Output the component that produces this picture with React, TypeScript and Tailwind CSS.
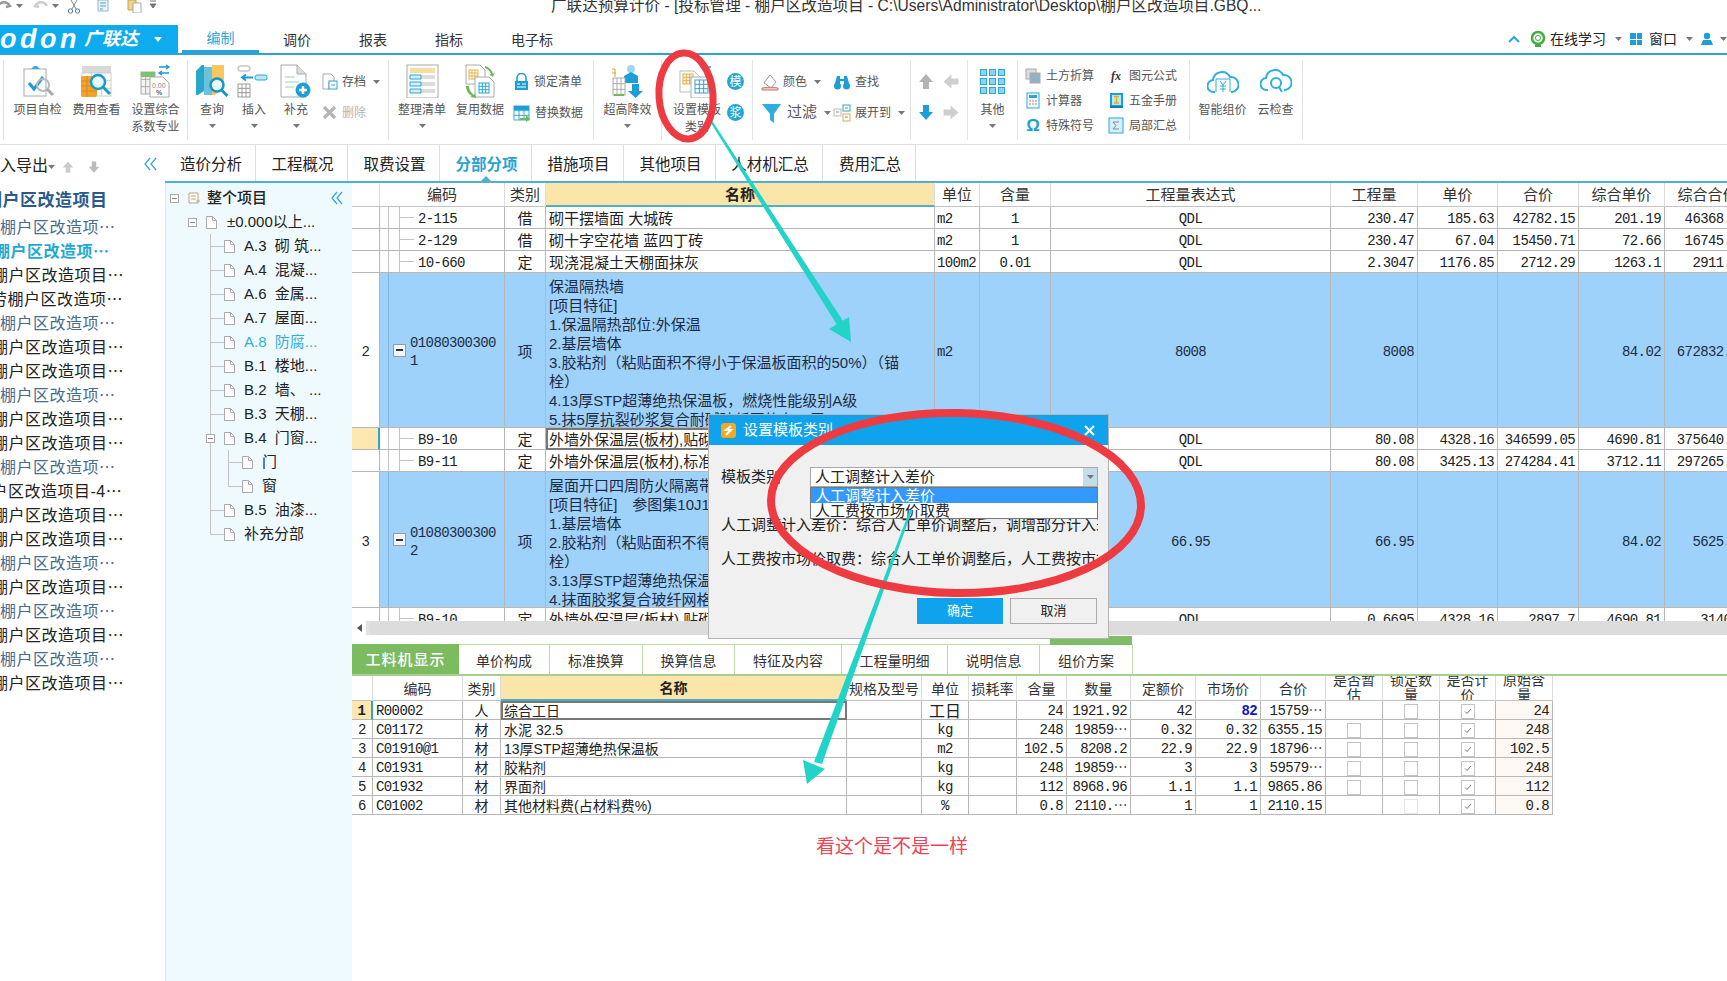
import type { ReactNode } from 'react';

function Caret({ className = '' }: { className?: string }) {
  return (
    <svg width="7" height="4" viewBox="0 0 7 4" className={className}>
      <path d="M0 0h7L3.5 4z" fill="#777" />
    </svg>
  );
}

function Svg({ w = 34, h = 34, children }: { w?: number; h?: number; children: ReactNode }) {
  return (
    <svg width={w} height={h} viewBox={`0 0 ${w} ${h}`} className="shrink-0">
      {children}
    </svg>
  );
}

/* ---------- ribbon icons ---------- */
const Grid3 = ({ x, y, w, h, c = '#999', f = '#fff' }: { x: number; y: number; w: number; h: number; c?: string; f?: string }) => (
  <g>
    <rect x={x} y={y} width={w} height={h} fill={f} stroke={c} />
    <path d={`M${x} ${y + h / 3}h${w}M${x} ${y + (2 * h) / 3}h${w}M${x + w / 3} ${y}v${h}M${x + (2 * w) / 3} ${y}v${h}`} stroke={c} />
  </g>
);

const Icons = {
  selfCheck: (
    <Svg>
      <rect x="3" y="5" width="22" height="27" fill="#fff" stroke="#aaa" />
      <path d="M10 5l3-3h3l3 3z" fill="#3ab0df" />
      <path d="M8 19l5 6 9-12" fill="none" stroke="#1f9ad6" strokeWidth="3" />
      <circle cx="22" cy="21" r="6" fill="none" stroke="#bbb" strokeWidth="2" />
      <path d="M26 25l6 6" stroke="#aaa" strokeWidth="3" />
    </Svg>
  ),
  cost: (
    <Svg>
      <rect x="2" y="2" width="29" height="8" fill="#d9d9d9" />
      <Grid3 x={2} y={9} w={29} h={23} c="#ccc" />
      <rect x="1" y="12" width="16" height="21" rx="2" fill="#f3a32c" />
      <path d="M1 17h16M1 22h16M1 27h16M7 12v21" stroke="#d98a17" />
      <circle cx="18" cy="18" r="7" fill="#e6f6fb" stroke="#1b9cc4" strokeWidth="2.5" />
      <path d="M23 23l7 7" stroke="#1b9cc4" strokeWidth="3" />
    </Svg>
  ),
  compose: (
    <Svg>
      <Grid3 x={2} y={8} w={14} h={22} c="#aaa" f="#f4f4f4" />
      <rect x="2" y="8" width="14" height="5" fill="#7cc36b" />
      <path d="M11 13h13l6 6v14H11z" fill="#fff" stroke="#aaa" />
      <text x="13" y="24" fontSize="7" fill="#888" fontFamily="Liberation Sans">0.00</text>
      <text x="17" y="31" fontSize="7" fontWeight="700" fill="#666" fontFamily="Liberation Sans">%</text>
      <path d="M20 3h10M27 1l3 2-3 2M30 9H20m3-2l-3 2 3 2" fill="none" stroke="#1f9ad6" strokeWidth="1.4" />
    </Svg>
  ),
  query: (
    <Svg>
      <path d="M1 7l6-6h2v26l-6 4H1z" fill="#27a7c9" />
      <path d="M9 3h8v28H9z" fill="#6cc2dc" />
      <path d="M17 1h12v22l-9 8h-3z" fill="#f9c660" />
      <circle cx="22" cy="21" r="6.5" fill="#eaf7fb" stroke="#1b95c4" strokeWidth="2.5" />
      <path d="M26.5 26l6 6" stroke="#1b95c4" strokeWidth="3" />
    </Svg>
  ),
  insert: (
    <Svg>
      <rect x="1" y="2" width="12" height="5" rx="2" fill="#fff" stroke="#aaa" />
      <rect x="18" y="11" width="12" height="5" rx="2" fill="#bde6f6" stroke="#2ba6d9" />
      <path d="M16 13.5H5m4-3l-4 3 4 3" fill="none" stroke="#1f9ad6" strokeWidth="2" />
      <Grid3 x={1} y={20} w={12} h={13} />
    </Svg>
  ),
  supplement: (
    <Svg>
      <path d="M2 1h16l9 9v23H2z" fill="#fff" stroke="#aaa" />
      <path d="M18 1v9h9" fill="#ddd" stroke="#aaa" />
      <path d="M6 13h10M6 18h14M6 23h9" stroke="#9fd6a0" strokeWidth="1.2" />
      <circle cx="24" cy="26" r="7.5" fill="#1c9fd8" />
      <path d="M24 22v8M20 26h8" stroke="#fff" strokeWidth="2.4" />
    </Svg>
  ),
  archive: (
    <Svg w={17} h={17}>
      <path d="M2 1h8l3 3v5H8v7H2z" fill="#fff" stroke="#aaa" />
      <rect x="8" y="8" width="8" height="8" fill="#fff" stroke="#2ba6d9" />
      <path d="M10 12h4" stroke="#2ba6d9" />
    </Svg>
  ),
  del: (
    <Svg w={17} h={17}>
      <path d="M3 3l11 11M14 3L3 14" stroke="#b5b5b5" strokeWidth="3.2" />
    </Svg>
  ),
  arrange: (
    <Svg>
      <rect x="2" y="1" width="31" height="33" fill="#fff" stroke="#aaa" />
      <rect x="5" y="4" width="25" height="5" fill="#f4dfa0" />
      <path d="M5 11h25v4H5zM5 18h25v4H5zM5 25h25v4H5z" fill="#dcdcdc" />
      <path d="M5 11h11v4H5zM5 18h11v4H5zM5 25h11v4H5z" fill="#d6eef8" stroke="#2ba6d9" />
    </Svg>
  ),
  reuse: (
    <Svg>
      <path d="M3 1h14l5 5v14H3z" fill="#fff" stroke="#aaa" />
      <Grid3 x={6} y={6} w={9} h={9} c="#e3b448" />
      <path d="M12 13h14l5 5v15H12z" fill="#fff" stroke="#aaa" />
      <Grid3 x={16} y={19} w={10} h={10} c="#2ba6d9" />
      <path d="M22 2c4 1 7 4 8 8l2-2-2 5-4-3 2 0c-1-3-3-5-6-6z" fill="#6cb858" />
      <path d="M3 22c0 4 2 8 6 10l-2 1 6 1-1-5-1 2c-3-2-5-5-5-9z" fill="#6cb858" />
    </Svg>
  ),
  lock: (
    <Svg w={17} h={18}>
      <path d="M4 8V5a4.500 4.500 0 0 1 9 0v3" fill="none" stroke="#1c9fd8" strokeWidth="1.6" />
      <rect x="2" y="8" width="13" height="9" fill="#1c9fd8" />
      <path d="M4 11h3M9 11h4M4 14h9" stroke="#fff" />
    </Svg>
  ),
  replace: (
    <Svg w={18} h={18}>
      <Grid3 x={1} y={2} w={15} h={14} c="#3aa9d4" />
      <rect x="1" y="2" width="15" height="4" fill="#1c9fd8" />
      <path d="M7 14h6v-3l4 4-4 3v-2H7z" fill="#6cb858" />
    </Svg>
  ),
  raise: (
    <Svg>
      <path d="M1 5h3v8M1 9h4" stroke="#d9a437" fill="none" />
      <circle cx="20" cy="5" r="4" fill="#9fd8ee" />
      <path d="M13 12l7-4 7 4v7H13z" fill="#1c9fd8" />
      <Grid3 x={2} y={14} w={12} h={17} c="#aaa" />
      <path d="M21 20h7v7h4l-7.500 7L17 27h4z" fill="#1c9fd8" />
      <path d="M3 31h10" stroke="#6cb858" strokeWidth="2" />
    </Svg>
  ),
  template: (
    <Svg w={36} h={34}>
      <path d="M1 7h14l6 6v15H1z" fill="#fff" stroke="#bbb" />
      <Grid3 x={4} y={10} w={10} h={10} c="#e3b448" f="#fbf3dc" />
      <path d="M12 13h15l7 6v15H12z" fill="#fff" stroke="#aaa" />
      <Grid3 x={16} y={16} w={13} h={13} c="#2ba6d9" />
      <path d="M32 3h-9m3-2.500L22 3l4 2.500" fill="none" stroke="#1f9ad6" strokeWidth="1.6" />
    </Svg>
  ),
  bucket: (
    <Svg w={18} h={18}>
      <path d="M9 2l6 7-5 6-7-5z" fill="#fff" stroke="#999" />
      <path d="M1 15c5-1 11-1 16 0v2H1z" fill="#f1c8c8" stroke="#c77" />
    </Svg>
  ),
  binoculars: (
    <Svg w={18} h={18}>
      <path d="M4 3h3v3h4V3h3l3 11h-6V8H7v6H1z" fill="#1c9fd8" />
      <circle cx="4.500" cy="13" r="3.500" fill="#1c9fd8" />
      <circle cx="13.500" cy="13" r="3.500" fill="#1c9fd8" />
    </Svg>
  ),
  funnel: (
    <Svg w={22} h={22}>
      <path d="M1 2h19l-7 10v9l-4-3v-6z" fill="#31aee0" />
    </Svg>
  ),
  expand: (
    <Svg w={18} h={18}>
      <rect x="1" y="5" width="7" height="7" fill="#fff" stroke="#bbb" />
      <rect x="10" y="1" width="7" height="6" fill="#fff" stroke="#2ba6d9" />
      <rect x="10" y="10" width="7" height="7" fill="#fff" stroke="#e0a94a" />
      <path d="M3 8h3M12 4h3M12 13h3" stroke="#888" />
    </Svg>
  ),
  earth: (
    <Svg w={16} h={16}>
      <rect x="1" y="1" width="10" height="10" fill="#ddd" stroke="#aaa" />
      <rect x="5" y="5" width="10" height="10" fill="#8fb4c4" stroke="#aaa" />
    </Svg>
  ),
  calc: (
    <Svg w={16} h={17}>
      <rect x="2" y="1" width="12" height="15" fill="#fff" stroke="#2ba6d9" />
      <rect x="4" y="3" width="8" height="3" fill="#2ba6d9" />
      <path d="M4 9h2M7 9h2M10 9h2M4 12h2M7 12h2M10 12h2" stroke="#888" />
    </Svg>
  ),
  hand: (
    <Svg w={16} h={17}>
      <rect x="2" y="1" width="13" height="14" fill="#1c9fd8" />
      <rect x="4" y="3" width="9" height="10" fill="#bfe6f6" />
      <path d="M6 4.500h5M8.500 4.500V11M6 11h5" stroke="#e0b020" strokeWidth="1.4" />
      <path d="M2 15h13" stroke="#0b7fb4" strokeWidth="2" />
    </Svg>
  ),
  sum: (
    <Svg w={16} h={17}>
      <rect x="1" y="1" width="14" height="15" fill="#d6f0fa" stroke="#2ba6d9" />
      <path d="M11 5H5l3 3.500L5 12h6" fill="none" stroke="#888" />
    </Svg>
  ),
  cloudYen: (
    <Svg w={32} h={26}>
      <path d="M8 24H7a6 6 0 0 1-1-12 9 9 0 0 1 17-3 7.500 7.500 0 0 1 2 15h-1" fill="none" stroke="#2bb0df" strokeWidth="2" />
      <path d="M9 24V11h14v13" fill="none" stroke="#2bb0df" strokeWidth="1" />
      <path d="M13 13l3 4 3-4M16 17v7M13 18h6M13 21h6" fill="none" stroke="#2bb0df" strokeWidth="1" />
    </Svg>
  ),
  cloudSearch: (
    <Svg w={32} h={26}>
      <path d="M8 22H7a6 6 0 0 1-1-12 9 9 0 0 1 17-3 7.500 7.500 0 0 1 2 15h-1" fill="none" stroke="#2bb0df" strokeWidth="2" />
      <circle cx="16" cy="15" r="5" fill="#fff" stroke="#2bb0df" strokeWidth="2" />
      <path d="M19 19l3 5" stroke="#2bb0df" strokeWidth="2" />
    </Svg>
  ),
};

/* ---------- ribbon parts ---------- */
function Big({ icon, label, line2, caret, w }: { icon: ReactNode; label: string; line2?: string; caret?: boolean; w: string }) {
  return (
    <div className={`flex flex-col items-center pt-1 ${w}`}>
      <div className="flex h-[34px] items-center justify-center">{icon}</div>
      <div className="mt-[4px] whitespace-nowrap text-[12px] leading-[17px] text-[#555]">{label}</div>
      {line2 && <div className="whitespace-nowrap text-[12px] leading-[17px] text-[#555]">{line2}</div>}
      {caret && <Caret className="mt-[5px]" />}
    </div>
  );
}

function Small({ icon, label, caret, muted, big }: { icon: ReactNode; label: string; caret?: boolean; muted?: boolean; big?: boolean }) {
  return (
    <div className="flex h-[31px] items-center gap-[4px]">
      {icon}
      <span className={`whitespace-nowrap ${big ? 'text-[15px] text-[#333]' : 'text-[12px]'} ${muted ? 'text-[#b5b5b5]' : 'text-[#555]'}`}>{label}</span>
      {caret && <Caret className="ml-[3px]" />}
    </div>
  );
}

function SmallRow({ icon, label }: { icon: ReactNode; label: string }) {
  return (
    <div className="flex h-[25px] items-center gap-[5px]">
      {icon}
      <span className="whitespace-nowrap text-[12px] text-[#555]">{label}</span>
    </div>
  );
}

function Group({ w, children, first }: { w: string; children: ReactNode; first?: boolean }) {
  return (
    <div className={`my-[5px] flex h-[80px] shrink-0 border-r border-[#e4e4e4] ${first ? 'border-l' : ''} ${w}`}>{children}</div>
  );
}

function Arrow({ d, color }: { d: number; color: string }) {
  return (
    <svg width="16" height="17" viewBox="0 0 16 17" style={{ transform: `rotate(${d}deg)` }}>
      <path d="M8 1l7 8h-4v7H5V9H1z" fill={color} />
    </svg>
  );
}

function Ribbon() {
  return (
    <div className="flex h-[90px] border-b border-[#e0e0e0] pl-[3px]">
      <Group first w="w-[185px] pl-[4px]">
        <Big w="w-[59px]" icon={Icons.selfCheck} label="项目自检" />
        <Big w="w-[59px]" icon={Icons.cost} label="费用查看" />
        <Big w="w-[59px]" icon={Icons.compose} label="设置综合" line2="系数专业" />
      </Group>
      <Group w="w-[201px] pl-[3px]">
        <Big w="w-[42px]" icon={Icons.query} label="查询" caret />
        <Big w="w-[42px]" icon={Icons.insert} label="插入" caret />
        <Big w="w-[42px]" icon={Icons.supplement} label="补充" caret />
        <div className="ml-[4px] flex flex-col pt-[6px]">
          <Small icon={Icons.archive} label="存档" caret />
          <Small icon={Icons.del} label="删除" muted />
        </div>
      </Group>
      <Group w="w-[205px] pl-[4px]">
        <Big w="w-[58px]" icon={Icons.arrange} label="整理清单" caret />
        <Big w="w-[58px]" icon={Icons.reuse} label="复用数据" />
        <div className="ml-[4px] flex flex-col pt-[6px]">
          <Small icon={Icons.lock} label="锁定清单" />
          <Small icon={Icons.replace} label="替换数据" />
        </div>
      </Group>
      <Group w="w-[68px]">
        <Big w="w-[67px]" icon={Icons.raise} label="超高降效" caret />
      </Group>
      <Group w="w-[91px] pl-[6px]">
        <Big w="w-[58px]" icon={Icons.template} label="设置模板" line2="类别" />
        <div className="ml-[1px] flex flex-col pt-[6px]">
          {['模', '浆'].map((t) => (
            <div key={t} className="flex h-[31px] items-center">
              <span className="flex h-[17px] w-[17px] items-center justify-center rounded-full bg-[#23a6d5] text-[12px] leading-none text-white">{t}</span>
            </div>
          ))}
        </div>
      </Group>
      <Group w="w-[158px] pl-[8px]">
        <div className="flex w-[72px] flex-col pt-[6px]">
          <Small icon={Icons.bucket} label="颜色" caret />
          <Small icon={Icons.funnel} label="过滤" caret big />
        </div>
        <div className="flex flex-col pt-[6px]">
          <Small icon={Icons.binoculars} label="查找" />
          <Small icon={Icons.expand} label="展开到" caret />
        </div>
      </Group>
      <Group w="w-[57px] pl-[7px]">
        <div className="grid grid-cols-[25px_16px] grid-rows-[31px_31px] items-center pt-[6px]">
          <Arrow d={0} color="#b3b3b3" />
          <Arrow d={270} color="#cfcfcf" />
          <Arrow d={180} color="#1c9fd8" />
          <Arrow d={90} color="#cfcfcf" />
        </div>
      </Group>
      <Group w="w-[50px]">
        <Big
          w="w-[49px]"
          icon={
            <div className="grid grid-cols-3 gap-[2px]">
              {Array.from({ length: 9 }).map((_, i) => (
                <span key={i} className="h-[7px] w-[7px] border border-[#2ba6d9] bg-[#8fd3ef]" />
              ))}
            </div>
          }
          label="其他"
          caret
        />
      </Group>
      <Group w="w-[172px] pl-[7px]">
        <div className="flex w-[83px] flex-col pt-[3px]">
          <SmallRow icon={Icons.earth} label="土方折算" />
          <SmallRow icon={Icons.calc} label="计算器" />
          <SmallRow icon={<span className="w-[16px] text-center text-[17px] font-bold leading-none text-[#1c9fd8]">Ω</span>} label="特殊符号" />
        </div>
        <div className="flex flex-col pt-[3px]">
          <SmallRow icon={<span className="w-[16px] text-center font-['Liberation_Serif',serif] text-[12px] font-bold italic leading-none text-[#333]">fx</span>} label="图元公式" />
          <SmallRow icon={Icons.hand} label="五金手册" />
          <SmallRow icon={Icons.sum} label="局部汇总" />
        </div>
      </Group>
      <Group w="w-[113px] pl-[6px]">
        <Big w="w-[53px]" icon={Icons.cloudYen} label="智能组价" />
        <Big w="w-[53px]" icon={Icons.cloudSearch} label="云检查" />
      </Group>
    </div>
  );
}

/* ---------- top bars ---------- */
function TitleRow() {
  return (
    <div className="flex h-[25px] items-start overflow-hidden">
      <div className="flex w-[551px] shrink-0 items-start text-[#777]">
        <svg width="16" height="12" viewBox="0 0 16 12" className="ml-[-4px]"><path d="M2 6c3-5 9-5 12 0l-4 1" fill="none" stroke="#999" strokeWidth="2.4" /></svg>
        <Caret className="ml-[4px] mt-[4px]" />
        <svg width="16" height="12" viewBox="0 0 16 12" className="ml-[10px]"><path d="M14 6C11 1 5 1 2 6l4 1" fill="none" stroke="#ccc" strokeWidth="2.4" /></svg>
        <Caret className="ml-[3px] mt-[4px]" />
        <svg width="14" height="14" viewBox="0 0 14 14" className="ml-[8px]"><path d="M4 0l5 9M10 0L5 9" stroke="#888" /><circle cx="3.500" cy="11" r="2.200" fill="none" stroke="#4a7ea8" /><circle cx="10.500" cy="11" r="2.200" fill="none" stroke="#4a7ea8" /></svg>
        <svg width="14" height="12" viewBox="0 0 14 12" className="ml-[16px]"><path d="M1 0h10v11H1z" fill="#eef6fb" stroke="#8db4cc" /><path d="M3 3h6M3 6h6M3 9h3" stroke="#4a9cc8" /></svg>
        <svg width="15" height="13" viewBox="0 0 15 13" className="ml-[16px]"><path d="M1 0h8v10H1z" fill="#f3d487" stroke="#c9a24a" /><path d="M6 3h8v10H6z" fill="#fff" stroke="#aaa" /></svg>
        <svg width="8" height="10" viewBox="0 0 8 10" className="ml-[7px]"><path d="M1 1h6M1 4h6l-3 4z" fill="#777" stroke="#777" /></svg>
      </div>
      <div className="-mt-[1px] whitespace-nowrap text-[15.6px] leading-[14px] text-[#333]">
        广联达预算计价 - [投标管理 - 棚户区改造项目 - C:\Users\Administrator\Desktop\棚户区改造项目.GBQ...
      </div>
    </div>
  );
}

function TabsRow() {
  return (
    <div className="flex h-[30px] border-b-2 border-[#29a3d8]">
      <div className="flex h-[28px] w-[178px] shrink-0 items-center overflow-hidden bg-[#0eabef] text-white">
        <span className="w-[84px] font-['Liberation_Sans',sans-serif] text-[27px] font-bold italic leading-none tracking-[3.5px]">odon</span>
        <span className="text-[18px] font-bold italic leading-none">广联达</span>
        <svg width="8" height="5" viewBox="0 0 8 5" className="ml-[16px]"><path d="M0 0h8L4 5z" fill="#fff" /></svg>
      </div>
      <div className="flex h-[28px]">
        <div className="ml-[4px] flex w-[77px] items-center justify-center border-b-[3px] border-[#29a3d8] pt-[2px] text-[14px] text-[#2ea6d9]">编制</div>
        {[['调价', 'w-[76px]'], ['报表', 'w-[76px]'], ['指标', 'w-[76px]'], ['电子标', 'w-[90px]']].map(([t, w]) => (
          <div key={t} className={`flex items-center justify-center pt-[2px] text-[14px] text-[#333] ${w}`}>{t}</div>
        ))}
      </div>
      <div className="ml-auto flex h-[28px] items-center text-[14px] text-[#222]">
        <svg width="12" height="8" viewBox="0 0 12 8"><path d="M1 7l5-5 5 5" fill="none" stroke="#2ea6d9" strokeWidth="2" /></svg>
        <svg width="16" height="18" viewBox="0 0 16 18" className="ml-[10px]"><circle cx="8" cy="8" r="6" fill="none" stroke="#3fae3f" strokeWidth="2.5" /><circle cx="8" cy="8" r="2.500" fill="none" stroke="#3fae3f" /><path d="M5 16h6" stroke="#3fae3f" strokeWidth="2" /></svg>
        <span className="ml-[4px] whitespace-nowrap">在线学习</span>
        <Caret className="ml-[9px]" />
        <span className="ml-[8px] grid h-[12px] w-[12px] grid-cols-2 gap-px">
          <i className="bg-[#1c9fd8]" /><i className="bg-[#1c9fd8]" /><i className="bg-[#1c9fd8]" /><i className="bg-[#1c9fd8]" />
        </span>
        <span className="ml-[7px] whitespace-nowrap">窗口</span>
        <Caret className="ml-[9px]" />
        <svg width="14" height="14" viewBox="0 0 14 14" className="ml-[7px]"><circle cx="7" cy="4" r="3.200" fill="#1c9fd8" /><path d="M1 13l2-5h8l2 5z" fill="#1c9fd8" /></svg>
        <Caret className="ml-[6px]" />
      </div>
    </div>
  );
}

/* ---------- left panels ---------- */
const BLUE_ROW = 'text-[#4a6c8c]';
const BLACK_ROW = 'text-[#222]';
const ListRows: [string, string, string][] = [
  ['棚户区改造项目', 'text-[#2a5a8c] font-bold text-[17px]', '-ml-[15px]'],
  ['棚户区改造项⋯', BLUE_ROW, 'ml-0'],
  ['棚户区改造项⋯', 'text-[#1fa9d2] font-bold', '-ml-[6px]'],
  ['棚户区改造项目⋯', BLACK_ROW, '-ml-[8px]'],
  ['劳棚户区改造项⋯', BLACK_ROW, '-ml-[9px]'],
  ['棚户区改造项⋯', BLUE_ROW, 'ml-0'],
  ['棚户区改造项目⋯', BLACK_ROW, '-ml-[8px]'],
  ['棚户区改造项目⋯', BLACK_ROW, '-ml-[8px]'],
  ['棚户区改造项⋯', BLUE_ROW, 'ml-0'],
  ['棚户区改造项目⋯', BLACK_ROW, '-ml-[8px]'],
  ['棚户区改造项目⋯', BLACK_ROW, '-ml-[8px]'],
  ['棚户区改造项⋯', BLUE_ROW, 'ml-0'],
  ['棚户区改造项目-4⋯', BLACK_ROW, '-ml-[25px]'],
  ['棚户区改造项目⋯', BLACK_ROW, '-ml-[8px]'],
  ['棚户区改造项目⋯', BLACK_ROW, '-ml-[8px]'],
  ['棚户区改造项⋯', BLUE_ROW, 'ml-0'],
  ['棚户区改造项目⋯', BLACK_ROW, '-ml-[8px]'],
  ['棚户区改造项⋯', BLUE_ROW, 'ml-0'],
  ['棚户区改造项目⋯', BLACK_ROW, '-ml-[8px]'],
  ['棚户区改造项⋯', BLUE_ROW, 'ml-0'],
  ['棚户区改造项目⋯', BLACK_ROW, '-ml-[8px]'],
];

function LeftList() {
  return (
    <div className="w-[165px] shrink-0 overflow-hidden">
      <div className="flex h-[44px] items-start pt-[11px]">
        <span className="-ml-[16px] whitespace-nowrap text-[16px] leading-[20px] text-[#222]">导入导出</span>
        <Caret className="mt-[9px]" />
        <svg width="12" height="14" viewBox="0 0 16 17" className="ml-[7px] mt-[4px]"><path d="M8 1l7 8h-4v7H5V9H1z" fill="#ccc" /></svg>
        <svg width="12" height="14" viewBox="0 0 16 17" className="ml-[14px] mt-[4px] rotate-180"><path d="M8 1l7 8h-4v7H5V9H1z" fill="#bbb" /></svg>
        <svg width="16" height="14" viewBox="0 0 16 14" className="ml-[43px] mt-[1px]"><path d="M7 1L2 7l5 6M13 1L8 7l5 6" fill="none" stroke="#2ea6d9" strokeWidth="1.2" /></svg>
      </div>
      {ListRows.map(([t, c, m], i) => (
        <div key={i} className={`h-[24px] whitespace-nowrap text-[16px] leading-[24px] tracking-[0.5px] ${i === 1 ? 'mt-[3px]' : ''} ${c} ${m}`}>
          {t}
        </div>
      ))}
    </div>
  );
}

function DocIcon() {
  return (
    <svg width="11" height="13" viewBox="0 0 11 13" className="shrink-0">
      <path d="M.5.5h6l4 4v8H.5z" fill="#fff" stroke="#aaa" />
      <path d="M6.500.5v4h4" fill="none" stroke="#aaa" />
    </svg>
  );
}

function MinusBox() {
  return (
    <span className="flex h-[9px] w-[9px] shrink-0 items-center justify-center border border-[#aaa] bg-white">
      <i className="block h-px w-[5px] bg-[#888]" />
    </span>
  );
}

function Stub({ last }: { last?: boolean }) {
  return (
    <div className="relative h-full w-[14px] shrink-0">
      <i className={`absolute left-0 top-0 block w-px bg-[#c4c4c4] ${last ? 'h-1/2' : 'h-full'}`} />
      <i className="absolute left-0 top-1/2 block h-px w-full bg-[#c4c4c4]" />
    </div>
  );
}

const TreeLeafs: [string, string?][] = [
  ['A.3  砌 筑...'],
  ['A.4  混凝...'],
  ['A.6  金属...'],
  ['A.7  屋面...'],
  ['A.8  防腐...', 'text-[#2fb0dc]'],
  ['B.1  楼地...'],
  ['B.2  墙、 ...'],
  ['B.3  天棚...'],
];

function Tree() {
  return (
    <div className="w-[187px] shrink-0 border-l border-[#dbe9ef] bg-[#effaff] pt-[3px] text-[15px] text-[#222]">
      <div className="flex h-[24px] items-center pl-[4px]">
        <MinusBox />
        <svg width="13" height="13" viewBox="0 0 13 13" className="ml-[9px]"><path d="M1 1h9v10H1z" fill="#fff" stroke="#b8a678" /><path d="M3 4h5M3 7h5M8 9h4" stroke="#b8a678" /></svg>
        <span className="ml-[6px] font-medium">整个项目</span>
        <svg width="14" height="14" viewBox="0 0 14 14" className="ml-auto mr-[8px]"><path d="M7 1L2 7l5 6M12 1L7 7l5 6" fill="none" stroke="#2ea6d9" strokeWidth="1.2" /></svg>
      </div>
      <div className="flex h-[24px] items-center pl-[22px]">
        <MinusBox />
        <span className="ml-[9px]"><DocIcon /></span>
        <span className="ml-[10px] whitespace-nowrap">±0.000以上...</span>
      </div>
      {TreeLeafs.map(([t, c]) => (
        <div key={t} className="flex h-[24px] items-center pl-[44px]">
          <Stub />
          <DocIcon />
          <span className={`ml-[9px] whitespace-pre ${c ?? ''}`}>{t}</span>
        </div>
      ))}
      <div className="relative flex h-[24px] items-center pl-[44px]">
        <i className="absolute left-[44px] top-0 block h-full w-px bg-[#c4c4c4]" />
        <span className="relative z-10 -ml-[4px] mr-[9px]"><MinusBox /></span>
        <DocIcon />
        <span className="ml-[9px] whitespace-pre">B.4  门窗...</span>
      </div>
      {['门', '窗'].map((t, i) => (
        <div key={t} className="flex h-[24px] items-center pl-[44px]">
          <div className="h-full w-[18px] shrink-0 border-l border-[#c4c4c4]" />
          <Stub last={i === 1} />
          <DocIcon />
          <span className="ml-[9px]">{t}</span>
        </div>
      ))}
      <div className="flex h-[24px] items-center pl-[44px]">
        <Stub />
        <DocIcon />
        <span className="ml-[9px] whitespace-pre">B.5  油漆...</span>
      </div>
      <div className="flex h-[24px] items-center pl-[44px]">
        <Stub last />
        <DocIcon />
        <span className="ml-[9px] whitespace-pre">补充分部</span>
      </div>
    </div>
  );
}

/* ---------- upper grid ---------- */
const MONO = "[font-family:'Liberation_Mono','Noto_Sans_CJK_SC',monospace] text-[14px] tracking-[-0.6px]";
const UPPER_COLS = 'grid-cols-[28px_125px_41px_389px_45px_71px_280px_87px_80px_81px_86px_86px]';
const CELL = 'flex items-center overflow-hidden whitespace-nowrap border-b border-r border-[#b7b7b7] pt-[3px]';

function UpperHeader() {
  const heads = ['', '编码', '类别', '名称', '单位', '含量', '工程量表达式', '工程量', '单价', '合价', '综合单价', '综合合价'];
  return (
    <div className={`grid h-[24px] text-[15px] text-[#333] ${UPPER_COLS}`}>
      {heads.map((h, i) => (
        <div
          key={i}
          className={`flex items-center justify-center overflow-hidden whitespace-nowrap border-r border-[#dcdcdc] pt-[2px] ${
            i === 3 ? 'border-b-2 border-b-[#4db0c8] bg-[#fbe5a8] font-bold text-[#222]' : 'border-b border-b-[#c4c4c4]'
          }`}
        >
          {h}
        </div>
      ))}
    </div>
  );
}

type SubData = { code: string; type: string; name: string; unit: string; qty: string; expr: string; amount: string; price: string; total: string; up: string; ut: string; selected?: boolean };

function SubRow({ d }: { d: SubData }) {
  return (
    <div className={`grid h-[22px] text-[#222] ${UPPER_COLS}`}>
      <div className={`${CELL} ${d.selected ? 'border-r-2 border-r-[#2fa6c8] bg-[#fde7b0]' : ''}`} />
      <div className={`flex items-center overflow-hidden whitespace-nowrap border-b border-r border-[#b7b7b7] pl-[8px]`}>
        <i className="block h-full w-px shrink-0 bg-[#c4c4c4]" />
        <i className="ml-[10px] block h-full w-px shrink-0 bg-[#c4c4c4]" />
        <i className="block h-px w-[14px] shrink-0 bg-[#c4c4c4]" />
        <span className={`ml-[4px] pt-[3px] ${MONO}`}>{d.code}</span>
      </div>
      <div className={`${CELL} justify-center text-[15px]`}>{d.type}</div>
      <div className={`${CELL} pl-[3px] text-[15px] ${d.selected ? 'outline-2 -outline-offset-2 outline-[#777]' : ''}`}>{d.name}</div>
      <div className={`${CELL} pl-[2px] ${MONO}`}>{d.unit}</div>
      <div className={`${CELL} justify-center ${MONO}`}>{d.qty}</div>
      <div className={`${CELL} justify-center ${MONO}`}>{d.expr}</div>
      <div className={`${CELL} justify-end pr-[3px] ${MONO}`}>{d.amount}</div>
      <div className={`${CELL} justify-end pr-[3px] ${MONO}`}>{d.price}</div>
      <div className={`${CELL} justify-end pr-[3px] ${MONO}`}>{d.total}</div>
      <div className={`${CELL} justify-end pr-[3px] ${MONO}`}>{d.up}</div>
      <div className={`${CELL} justify-end pr-[3px] ${MONO}`}>{d.ut}</div>
    </div>
  );
}

function ItemRow({ h, no, code, lines, expr, amount, up, ut }: { h: string; no: string; code: string[]; lines: string[]; expr: string; amount: string; up: string; ut: string }) {
  const c = `${CELL} pt-[5px] text-[#1b2b45]`;
  return (
    <div className={`grid bg-[#9fd2fa] ${h} ${UPPER_COLS}`}>
      <div className={`${c} justify-center bg-white ${MONO}`}>{no}</div>
      <div className="flex items-center overflow-hidden whitespace-nowrap border-b border-r border-[#b7b7b7] pl-[8px] text-[#1b2b45]">
        <i className="block h-full w-px shrink-0 bg-[#86b4d6]" />
        <span className="ml-[4px] flex h-[13px] w-[13px] shrink-0 items-center justify-center border border-[#999] bg-[#eef7fd]">
          <i className="block h-[2px] w-[7px] bg-[#333]" />
        </span>
        <span className={`ml-[4px] pt-[4px] leading-[18px] ${MONO}`}>
          {code[0]}
          <br />
          {code[1]}
        </span>
      </div>
      <div className={`${c} justify-center text-[15px]`}>项</div>
      <div className="overflow-hidden whitespace-nowrap border-b border-r border-[#b7b7b7] pl-[3px] pt-[4px] text-[15px] leading-[19px] text-[#1b2b45]">
        {lines.map((l) => (
          <div key={l}>{l}</div>
        ))}
      </div>
      <div className={`${c} pl-[2px] ${MONO}`}>m2</div>
      <div className={c} />
      <div className={`${c} justify-center ${MONO}`}>{expr}</div>
      <div className={`${c} justify-end pr-[3px] ${MONO}`}>{amount}</div>
      <div className={c} />
      <div className={c} />
      <div className={`${c} justify-end pr-[3px] ${MONO}`}>{up}</div>
      <div className={`${c} justify-end pr-[3px] ${MONO}`}>{ut}</div>
    </div>
  );
}

function UpperGrid() {
  return (
    <div className="h-[438px] overflow-hidden">
      <UpperHeader />
      <SubRow d={{ code: '2-115', type: '借', name: '砌干摆墙面 大城砖', unit: 'm2', qty: '1', expr: 'QDL', amount: '230.47', price: '185.63', total: '42782.15', up: '201.19', ut: '46368.26' }} />
      <SubRow d={{ code: '2-129', type: '借', name: '砌十字空花墙 蓝四丁砖', unit: 'm2', qty: '1', expr: 'QDL', amount: '230.47', price: '67.04', total: '15450.71', up: '72.66', ut: '16745.95' }} />
      <SubRow d={{ code: '10-660', type: '定', name: '现浇混凝土天棚面抹灰', unit: '100m2', qty: '0.01', expr: 'QDL', amount: '2.3047', price: '1176.85', total: '2712.29', up: '1263.1', ut: '2911.07' }} />
      <ItemRow
        h="h-[155px]"
        no="2"
        code={['01080300300', '1']}
        lines={[
          '保温隔热墙',
          '[项目特征]',
          '1.保温隔热部位:外保温',
          '2.基层墙体',
          '3.胶粘剂（粘贴面积不得小于保温板面积的50%）（锚',
          '栓）',
          '4.13厚STP超薄绝热保温板，燃烧性能级别A级',
          '5.抹5厚抗裂砂浆复合耐碱玻纤网格布一层',
        ]}
        expr="8008"
        amount="8008"
        up="84.02"
        ut="672832.16"
      />
      <SubRow d={{ code: 'B9-10', type: '定', name: '外墙外保温层(板材),贴砌', unit: 'm2', qty: '0.01', expr: 'QDL', amount: '80.08', price: '4328.16', total: '346599.05', up: '4690.81', ut: '375640.06', selected: true }} />
      <SubRow d={{ code: 'B9-11', type: '定', name: '外墙外保温层(板材),标准', unit: 'm2', qty: '0.01', expr: 'QDL', amount: '80.08', price: '3425.13', total: '274284.41', up: '3712.11', ut: '297265.77' }} />
      <ItemRow
        h="h-[136px]"
        no="3"
        code={['01080300300', '2']}
        lines={[
          '屋面开口四周防火隔离带',
          '[项目特征]　参图集10J121',
          '1.基层墙体',
          '2.胶粘剂（粘贴面积不得小于保温板面积的50%）（锚',
          '栓）',
          '3.13厚STP超薄绝热保温板，燃烧性能级别A级',
          '4.抹面胶浆复合玻纤网格布',
        ]}
        expr="66.95"
        amount="66.95"
        up="84.02"
        ut="5625.14"
      />
      <SubRow d={{ code: 'B9-10', type: '定', name: '外墙外保温层(板材),贴砌', unit: 'm2', qty: '0.01', expr: 'QDL', amount: '0.6695', price: '4328.16', total: '2897.7', up: '4690.81', ut: '3140.5' }} />
    </div>
  );
}

function Scrollbar() {
  return (
    <div className="flex h-[14px] bg-[#e2e2e2]">
      <div className="flex w-[14px] shrink-0 items-center justify-center bg-white">
        <svg width="5" height="8" viewBox="0 0 5 8"><path d="M5 0v8L0 4z" fill="#555" /></svg>
      </div>
      <div className="ml-[4px] flex-1 rounded-l-[3px] bg-[#dcdcdc]" />
    </div>
  );
}

/* ---------- lower grid ---------- */
const LOWER_COLS = 'grid-cols-[21px_90px_38px_346px_75px_47px_48px_50px_64px_65px_65px_65px_57px_57px_56px_57px]';

function Check({ on, faint }: { on?: boolean; faint?: boolean }) {
  return (
    <span className={`flex h-[15px] w-[14px] items-center justify-center border bg-white ${faint ? 'border-[#e6e6e6]' : 'border-[#c4c4c4]'}`}>
      {on && (
        <svg width="8" height="7" viewBox="0 0 8 7"><path d="M1 3.500l2 2 4-4.500" fill="none" stroke="#777" /></svg>
      )}
    </span>
  );
}

const LowerRows = [
  { code: 'R00002', type: '人', name: '综合工日', unit: '工日', rate: '24', qty: '1921.92', fixed: '42', market: '82', total: '15759⋯', est: false, lockFaint: false, orig: '24' },
  { code: 'C01172', type: '材', name: '水泥 32.5', unit: 'kg', rate: '248', qty: '19859⋯', fixed: '0.32', market: '0.32', total: '6355.15', est: true, lockFaint: false, orig: '248' },
  { code: 'C01910@1', type: '材', name: '13厚STP超薄绝热保温板', unit: 'm2', rate: '102.5', qty: '8208.2', fixed: '22.9', market: '22.9', total: '18796⋯', est: true, lockFaint: false, orig: '102.5' },
  { code: 'C01931', type: '材', name: '胶粘剂', unit: 'kg', rate: '248', qty: '19859⋯', fixed: '3', market: '3', total: '59579⋯', est: true, lockFaint: false, orig: '248' },
  { code: 'C01932', type: '材', name: '界面剂', unit: 'kg', rate: '112', qty: '8968.96', fixed: '1.1', market: '1.1', total: '9865.86', est: true, lockFaint: false, orig: '112' },
  { code: 'C01002', type: '材', name: '其他材料费(占材料费%)', unit: '%', rate: '0.8', qty: '2110.⋯', fixed: '1', market: '1', total: '2110.15', est: false, lockFaint: true, orig: '0.8' },
];

function LowerGrid() {
  const heads = ['', '编码', '类别', '名称', '规格及型号', '单位', '损耗率', '含量', '数量', '定额价', '市场价', '合价'];
  const wrapped = [['是否暂', '估'], ['锁定数', '量'], ['是否计', '价'], ['原始含', '量']];
  const c = 'flex items-center overflow-hidden whitespace-nowrap border-b border-r border-[#b7b7b7] pt-[3px] text-[#222]';
  return (
    <div className="w-[1201px]">
      <div className={`grid h-[25px] text-[14px] text-[#333] ${LOWER_COLS}`}>
        {heads.map((h, i) => (
          <div
            key={i}
            className={`flex items-center justify-center overflow-hidden whitespace-nowrap border-r border-[#dcdcdc] pt-[2px] ${
              i === 3 ? 'border-b-2 border-b-[#4db0c8] bg-[#fbe5a8] font-bold text-[#222]' : 'border-b border-b-[#c4c4c4]'
            }`}
          >
            {h}
          </div>
        ))}
        {wrapped.map(([a, b]) => (
          <div key={a} className="flex flex-col items-center justify-center overflow-hidden border-b border-r border-[#dcdcdc] border-b-[#c4c4c4] leading-[15px]">
            <span>{a}</span>
            <span>{b}</span>
          </div>
        ))}
      </div>
      {LowerRows.map((r, i) => {
        const active = i === 0;
        return (
          <div key={r.code} className={`grid h-[19px] ${LOWER_COLS}`}>
            <div className={`${c} justify-center ${MONO} ${active ? 'border-r-2 border-r-[#2fa6c8] bg-[#fde7b0] font-bold' : ''}`}>{i + 1}</div>
            <div className={`${c} pl-[3px] ${MONO}`}>{r.code}</div>
            <div className={`${c} justify-center text-[14px]`}>{r.type}</div>
            <div className={`${c} pl-[3px] text-[14px] ${active ? 'outline-2 -outline-offset-2 outline-[#777]' : ''}`}>{r.name}</div>
            <div className={c} />
            <div className={`${c} justify-center ${active ? 'text-[16px]' : MONO}`}>{r.unit}</div>
            <div className={c} />
            <div className={`${c} justify-end pr-[3px] ${MONO}`}>{r.rate}</div>
            <div className={`${c} justify-end pr-[3px] ${MONO}`}>{r.qty}</div>
            <div className={`${c} justify-end pr-[3px] ${MONO}`}>{r.fixed}</div>
            <div className={`${c} justify-end pr-[3px] ${MONO} ${active ? 'font-bold text-[#1313c4]' : ''}`}>{r.market}</div>
            <div className={`${c} justify-end pr-[3px] ${MONO}`}>{r.total}</div>
            <div className={`${c} justify-center`}>{r.est && <Check />}</div>
            <div className={`${c} justify-center`}><Check faint={r.lockFaint} /></div>
            <div className={`${c} justify-center`}><Check on /></div>
            <div className={`${c} justify-end bg-[#fdf8f3] pr-[3px] ${MONO}`}>{r.orig}</div>
          </div>
        );
      })}
    </div>
  );
}

function BottomTabs() {
  const tabs: [string, string][] = [
    ['单价构成', 'w-[91px]'],
    ['标准换算', 'w-[93px]'],
    ['换算信息', 'w-[92px]'],
    ['特征及内容', 'w-[107px]'],
    ['工程量明细', 'w-[106px]'],
    ['说明信息', 'w-[92px]'],
  ];
  return (
    <div className="flex h-[32px] border-b-2 border-[#a7d08f]">
      <div className="flex w-[107px] items-center justify-center bg-[#7cbb60] pt-[3px] text-[15px] font-medium tracking-[1px] text-white">工料机显示</div>
      {tabs.map(([t, w]) => (
        <div key={t} className={`flex items-center justify-center border-r border-t border-[#bcdcae] pt-[3px] text-[14px] text-[#333] ${w}`}>{t}</div>
      ))}
      <div className="relative flex w-[93px] items-center justify-center border-r border-t border-[#bcdcae] pt-[3px] text-[14px] text-[#333]">
        组价方案
        <i className="absolute -top-[9px] left-[10px] right-0 block h-[9px] bg-[#7fbc66]" />
      </div>
    </div>
  );
}

/* ---------- dialog ---------- */
function Dialog() {
  return (
    <div className="absolute left-[708px] top-[414px] h-[225px] w-[401px] border border-[#b4b4b4] bg-[#f0f0f0]">
      <div className="flex h-[30px] items-center bg-[#0ea3ec] pl-[12px] pr-[13px] text-white">
        <span className="flex h-[15px] w-[15px] items-center justify-center rounded-[3px] bg-[#f5a623]">
          <svg width="11" height="11" viewBox="0 0 11 11"><path d="M8 1L3 5h5L3 10" fill="none" stroke="#fff" strokeWidth="2" /></svg>
        </span>
        <span className="ml-[7px] text-[15px]">设置模板类别</span>
        <svg width="11" height="11" viewBox="0 0 11 11" className="ml-auto"><path d="M1 1l9 9M10 1l-9 9" stroke="#fff" strokeWidth="2.200" /></svg>
      </div>
      <div className="pl-[12px] pt-[22px] text-[15px] leading-[20px] text-[#222]">
        <div className="flex items-center">
          <span className="w-[89px] shrink-0">模板类别</span>
          <div className="relative flex h-[20px] w-[288px] items-center border border-[#a8a8a8] bg-white pl-[4px]">
            人工调整计入差价
            <span className="absolute bottom-0 right-0 top-0 flex w-[14px] items-center justify-center bg-[#c3dde9]">
              <Caret />
            </span>
            <div className="absolute -left-px top-[19px] w-[288px] border border-[#777] bg-white leading-[15px]">
              <div className="bg-[#3399ff] pl-[4px] text-white">人工调整计入差价</div>
              <div className="pl-[4px]">人工费按市场价取费</div>
            </div>
          </div>
        </div>
        <div className="mt-[28px] w-[377px] overflow-hidden whitespace-nowrap">人工调整计入差价：综合人工单价调整后，调增部分计入差价</div>
        <div className="mt-[14px] w-[377px] overflow-hidden whitespace-nowrap">人工费按市场价取费：综合人工单价调整后，人工费按市场价取费</div>
      </div>
      <div className="mt-[29px] flex justify-end gap-[7px] pr-[11px]">
        <div className="flex h-[26px] w-[86px] items-center justify-center bg-[#0ea3ec] text-[13px] text-white">确定</div>
        <div className="flex h-[26px] w-[87px] items-center justify-center border border-[#aaa] bg-[#f0f0f0] text-[13px] text-[#222]">取消</div>
      </div>
    </div>
  );
}

function Annotations() {
  return (
    <svg className="pointer-events-none absolute left-0 top-0" width="1727" height="981" viewBox="0 0 1727 981">
      <g fill="#22d3c9">
        <path d="M712 120.500 L710 121.500 L839 328 L845 324 Z" />
        <path d="M851 342 L829 329 L849 317 Z" />
        <path d="M912 510.500 L910 509.500 L814 762 L822 764 Z" />
        <path d="M807 784 L803 760 L825 769 Z" />
      </g>
      <g fill="none" stroke="#ee3b41">
        <ellipse cx="686" cy="96" rx="27" ry="43" strokeWidth="7" transform="rotate(-4 686 96)" />
        <ellipse cx="956" cy="503" rx="185" ry="90" strokeWidth="8" transform="rotate(1 956 503)" />
      </g>
    </svg>
  );
}

const MainTabs: [string, string][] = [
  ['造价分析', 'w-[91px]'],
  ['工程概况', 'w-[92px]'],
  ['取费设置', 'w-[92px]'],
  ['分部分项', 'w-[92px]'],
  ['措施项目', 'w-[92px]'],
  ['其他项目', 'w-[92px]'],
  ['人材机汇总', 'w-[107px]'],
  ['费用汇总', 'w-[93px]'],
];

export default function App() {
  return (
    <div className="relative h-[981px] w-[1727px] overflow-hidden bg-white [font-family:'Liberation_Sans','Noto_Sans_CJK_SC',sans-serif]">
      <TitleRow />
      <TabsRow />
      <Ribbon />
      <div className="flex h-[836px]">
        <LeftList />
        <div className="flex min-w-0 flex-1 flex-col">
          <div className="flex h-[38px] shrink-0 border-b-2 border-[#4db0d4]">
            {MainTabs.map(([t, w]) => (
              <div
                key={t}
                className={`relative flex items-center justify-center border-r border-[#dfdfdf] pl-[2px] pt-[3px] text-[15.5px] ${w} ${t === '分部分项' ? 'font-bold text-[#2aa3d4]' : 'text-[#222]'}`}
              >
                {t}
                {t === '分部分项' && (
                  <svg width="10" height="5" viewBox="0 0 10 5" className="absolute bottom-0 left-1/2 -translate-x-1/2"><path d="M0 5l5-5 5 5z" fill="#4db0d4" /></svg>
                )}
              </div>
            ))}
          </div>
          <div className="flex min-h-0 flex-1">
            <Tree />
            <div className="min-w-0 flex-1">
              <UpperGrid />
              <Scrollbar />
              <div className="h-[9px]" />
              <BottomTabs />
              <LowerGrid />
              <div className="ml-[464px] mt-[20px] text-[19px] leading-[24px] text-[#ee4455]">看这个是不是一样</div>
            </div>
          </div>
        </div>
      </div>
      <Dialog />
      <Annotations />
    </div>
  );
}
